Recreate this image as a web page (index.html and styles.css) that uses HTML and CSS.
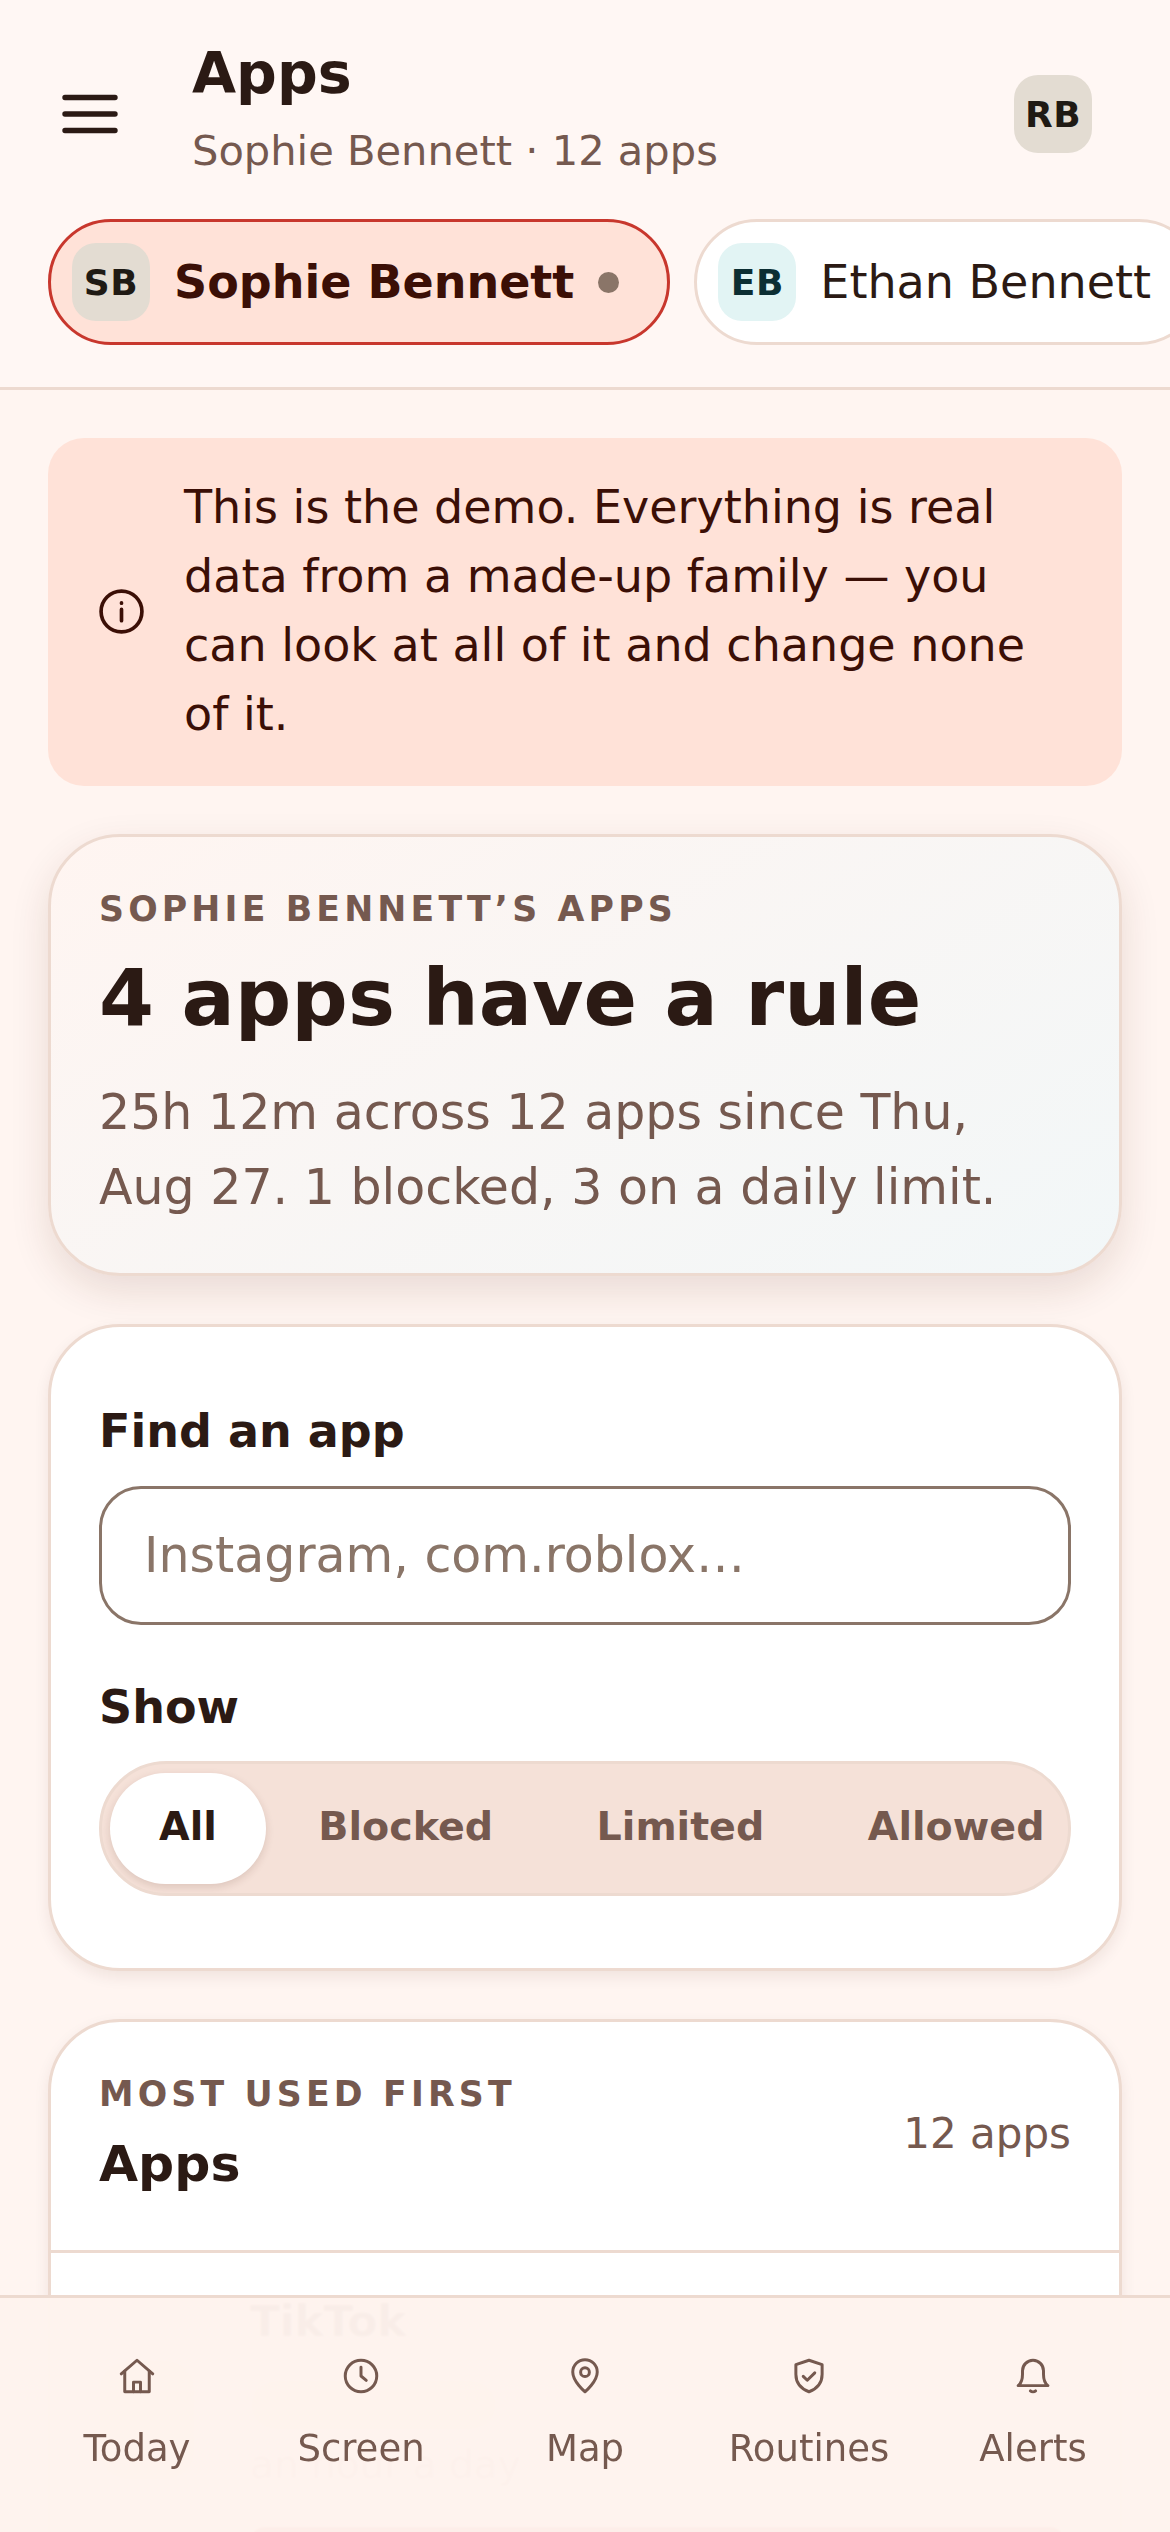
FILE: index.html
```html
<!DOCTYPE html>
<html lang="en">
<head>
  <meta charset="UTF-8" />
  <meta name="viewport" content="width=device-width, initial-scale=1.0" />
  <title>Apps</title>
  <link rel="stylesheet" href="styles.css">
</head>
<body>
  <div class="page">
    <header class="header">
      <div class="topbar">
        <svg class="menu-icon" viewBox="0 0 56 40" fill="none" stroke="#2b1a14" stroke-width="5.4" stroke-linecap="round">
          <path d="M3 3.500h50M3 20h50M3 36.500h50" />
        </svg>
        <div class="titles">
          <h1>Apps</h1>
          <p>Sophie Bennett · 12 apps</p>
        </div>
        <div class="avatar avatar-rb">RB</div>
      </div>
      <div class="chips">
        <div class="chip chip-active">
          <div class="avatar avatar-sb">SB</div>
          <span class="chip-name">Sophie Bennett</span>
          <span class="chip-dot"></span>
        </div>
        <div class="chip">
          <div class="avatar avatar-eb">EB</div>
          <span class="chip-name">Ethan Bennett</span>
        </div>
      </div>
    </header>

    <main class="content">
      <div class="banner">
        <svg class="banner-icon" viewBox="0 0 24 24" fill="none" stroke="#3b0f06" stroke-width="1.8" stroke-linecap="round">
          <circle cx="12" cy="12" r="10" />
          <path d="M12 11v5.500M12 7.800v.1" />
        </svg>
        <p>This is the demo. Everything is real data from a made-up family — you can look at all of it and change none of it.</p>
      </div>

      <section class="card hero">
        <div class="eyebrow">SOPHIE BENNETT’S APPS</div>
        <h2>4 apps have a rule</h2>
        <p>25h 12m across 12 apps since Thu, Aug 27. 1 blocked, 3 on a daily limit.</p>
      </section>

      <section class="card filters">
        <label class="field-label" for="search">Find an app</label>
        <input class="search" id="search" type="text" placeholder="Instagram, com.roblox…" />
        <div class="field-label show-label">Show</div>
        <div class="segment">
          <button class="seg-btn seg-active">All</button>
          <button class="seg-btn">Blocked</button>
          <button class="seg-btn">Limited</button>
          <button class="seg-btn">Allowed</button>
        </div>
      </section>

      <section class="card list">
        <div class="list-head">
          <div>
            <div class="eyebrow">MOST USED FIRST</div>
            <h3>Apps</h3>
          </div>
          <span class="list-count">12 apps</span>
        </div>
        <div class="app-row">
          <div class="app-icon"></div>
          <div class="app-body">
            <div class="app-name">TikTok</div>
            <div class="app-pill"></div>
            <div class="app-meta">an hour a day</div>
            <div class="app-bar"></div>
          </div>
        </div>
      </section>
    </main>

    <nav class="tabbar">
      <div class="tab">
        <svg viewBox="0 0 24 24"><path d="M3 10.800 12 3l9 7.800" /><path d="M5 9.300V21h14V9.300" /><path d="M10 21v-5.500h4V21" /></svg>
        <span>Today</span>
      </div>
      <div class="tab">
        <svg viewBox="0 0 24 24"><circle cx="12" cy="12" r="9" /><path d="M12 7v5l3 2.500" /></svg>
        <span>Screen</span>
      </div>
      <div class="tab">
        <svg viewBox="0 0 24 24"><path d="M12 21s-7-5.800-7-11.300a7 7 0 0 1 14 0C19 15.200 12 21 12 21z" /><circle cx="12" cy="9.800" r="2.500" /></svg>
        <span>Map</span>
      </div>
      <div class="tab">
        <svg viewBox="0 0 24 24"><path d="M12 3l7.500 2.500V11c0 5-3.300 8.400-7.500 10-4.200-1.600-7.500-5-7.500-10V5.500z" /><path d="M8.700 12.200l2.300 2.200 4.300-4.200" /></svg>
        <span>Routines</span>
      </div>
      <div class="tab">
        <svg viewBox="0 0 24 24"><path d="M3.500 17.500c2-1.500 2.500-3.500 2.500-6.500V9a6 6 0 0 1 12 0v2c0 3 .5 5 2.500 6.500z" /><path d="M10.500 20.500c.8.7 2.200.7 3 0" /></svg>
        <span>Alerts</span>
      </div>
    </nav>
  </div>
</body>
</html>
```

FILE: styles.css
```css
* {
  margin: 0;
  padding: 0;
  box-sizing: border-box;
}

body {
  font-family: 'DejaVu Sans', sans-serif;
  background: #fff5f1;
  color: #2b1a14;
}

.page {
  position: relative;
  width: 1170px;
  height: 2532px;
  overflow: hidden;
  background: #fff5f1;
}

/* header */
.header {
  background: #fff7f4;
  border-bottom: 3px solid #eddad0;
  height: 390px;
}

.topbar {
  display: flex;
  padding: 40px 78px 0 62px;
}

.menu-icon {
  width: 56px;
  height: 40px;
  margin-top: 54px;
  flex: none;
}

.titles {
  flex: 1;
  margin-left: 74px;
}

.titles h1 {
  font-size: 57px;
  line-height: 66px;
  font-weight: 700;
}

.titles p {
  font-size: 41.6px;
  line-height: 60px;
  margin-top: 15px;
  color: #75594f;
}

.avatar {
  width: 78px;
  height: 78px;
  flex: none;
  border-radius: 24px;
  display: flex;
  align-items: center;
  justify-content: center;
  font-size: 36px;
  font-weight: 700;
  letter-spacing: 0.5px;
}

.avatar-rb {
  margin-top: 35px;
  background: #e3dcd2;
  color: #1f1a14;
}

.avatar-sb {
  background: #e3dcd2;
  color: #1f1a14;
}

.avatar-eb {
  background: #e2f4f4;
  color: #0c2e33;
}

.chips {
  display: flex;
  gap: 24px;
  padding-left: 48px;
  margin-top: 38px;
  overflow: hidden;
}

.chip {
  display: flex;
  align-items: center;
  gap: 24px;
  flex: none;
  height: 126px;
  padding: 0 48px 0 21px;
  background: #fff;
  border: 3px solid #eddad0;
  border-radius: 63px;
}

.chip-name {
  font-size: 46px;
  white-space: nowrap;
}

.chip-active {
  background: #ffe2d8;
  border-color: #c8372d;
}

.chip-active .chip-name {
  font-weight: 700;
  color: #3b0f06;
}

.chip-dot {
  width: 21px;
  height: 21px;
  border-radius: 50%;
  background: #8a7568;
}

/* main column */
.content {
  display: flex;
  flex-direction: column;
  gap: 48px;
  padding: 48px 48px 0;
}

.banner {
  display: flex;
  align-items: center;
  gap: 38px;
  padding: 35px 48px 37px 49px;
  background: #ffe2d8;
  border-radius: 36px;
  color: #3b0f06;
  font-size: 46px;
  line-height: 69px;
}

.banner-icon {
  width: 49px;
  height: 49px;
  flex: none;
}

.card {
  background: #fff;
  border: 3px solid #eddad0;
  border-radius: 72px;
  box-shadow: 0 6px 15px rgba(70, 30, 15, 0.08);
}

.eyebrow {
  font-size: 34.7px;
  line-height: 48px;
  font-weight: 700;
  letter-spacing: 4.16px;
  color: #75594f;
}

.hero {
  padding: 48px;
  background: linear-gradient(150deg, #fff5f1 0%, #f2f7f8 100%);
  box-shadow: 0 15px 39px rgba(70, 30, 15, 0.12);
}

.hero h2 {
  font-size: 79px;
  line-height: 96px;
  margin: 17px 0 29px;
}

.hero p {
  font-size: 49px;
  line-height: 75px;
  color: #75594f;
}

.filters {
  display: flex;
  flex-direction: column;
  padding: 73px 48px 72px;
}

.field-label {
  font-size: 46px;
  line-height: 63px;
  font-weight: 700;
}

.search {
  height: 139px;
  margin-top: 23px;
  padding: 0 42px;
  border: 3px solid #8a7568;
  border-radius: 42px;
  background: #fff;
  font-family: inherit;
  font-size: 49px;
  color: #2b1a14;
}

.search::placeholder {
  color: #8a7568;
  opacity: 1;
}

.show-label {
  margin-top: 51px;
}

.segment {
  display: flex;
  gap: 1.5px;
  height: 135px;
  margin-top: 22px;
  padding: 9px 8px;
  overflow: hidden;
  background: #f5e1d8;
  border: 3px solid #eddad0;
  border-radius: 68px;
}

.seg-btn {
  flex: none;
  padding: 0 51px 6px;
  border: none;
  border-radius: 60px;
  background: none;
  font-family: inherit;
  font-size: 39.6px;
  font-weight: 700;
  color: #75594f;
}

.seg-active {
  padding: 0 49px 6px;
  background: #fff;
  color: #2b1a14;
  box-shadow: 0 3px 9px rgba(70, 30, 15, 0.14);
}

.list-head {
  display: flex;
  align-items: center;
  justify-content: space-between;
  padding: 48px 48px 55px;
  border-bottom: 3px solid #eddad0;
}

.list-head h3 {
  font-size: 50.5px;
  line-height: 63px;
  margin-top: 14px;
}

.list-count {
  font-size: 42px;
  line-height: 60px;
  margin-top: 3px;
  color: #75594f;
}

.app-row {
  display: flex;
  align-items: flex-start;
  gap: 55px;
  padding: 37px 48px;
}

.app-icon {
  width: 96px;
  height: 120px;
  margin-top: 70px;
  flex: none;
  border-radius: 30px;
  background: #e3dcd2;
}

.app-body {
  flex: 1;
}

.app-name {
  font-size: 43.5px;
  line-height: 63px;
  font-weight: 700;
}

.app-pill {
  width: 247px;
  height: 50px;
  margin-top: 27px;
  border-radius: 25px;
  background: #ffe2d8;
}

.app-meta {
  margin-top: 6px;
  font-size: 39px;
  line-height: 57px;
  color: #b39a8e;
}

.app-bar {
  height: 30px;
  margin: 34px 6px 0 0;
  border-radius: 15px;
  background: #c8372d;
}

/* bottom tabs, laid over the list */
.tabbar {
  position: absolute;
  left: 0;
  right: 0;
  bottom: 0;
  height: 237px;
  display: flex;
  padding: 57px 25px 0;
  background: rgba(254, 243, 238, 0.975);
  border-top: 3px solid #eddad0;
  backdrop-filter: blur(1px);
}

.tab {
  flex: 1;
  display: flex;
  flex-direction: column;
  align-items: center;
  gap: 25px;
  color: #75594f;
  font-size: 37px;
  line-height: 54px;
}

.tab svg {
  width: 42px;
  height: 42px;
  fill: none;
  stroke: #75594f;
  stroke-width: 1.7;
  stroke-linecap: round;
  stroke-linejoin: round;
}
```
